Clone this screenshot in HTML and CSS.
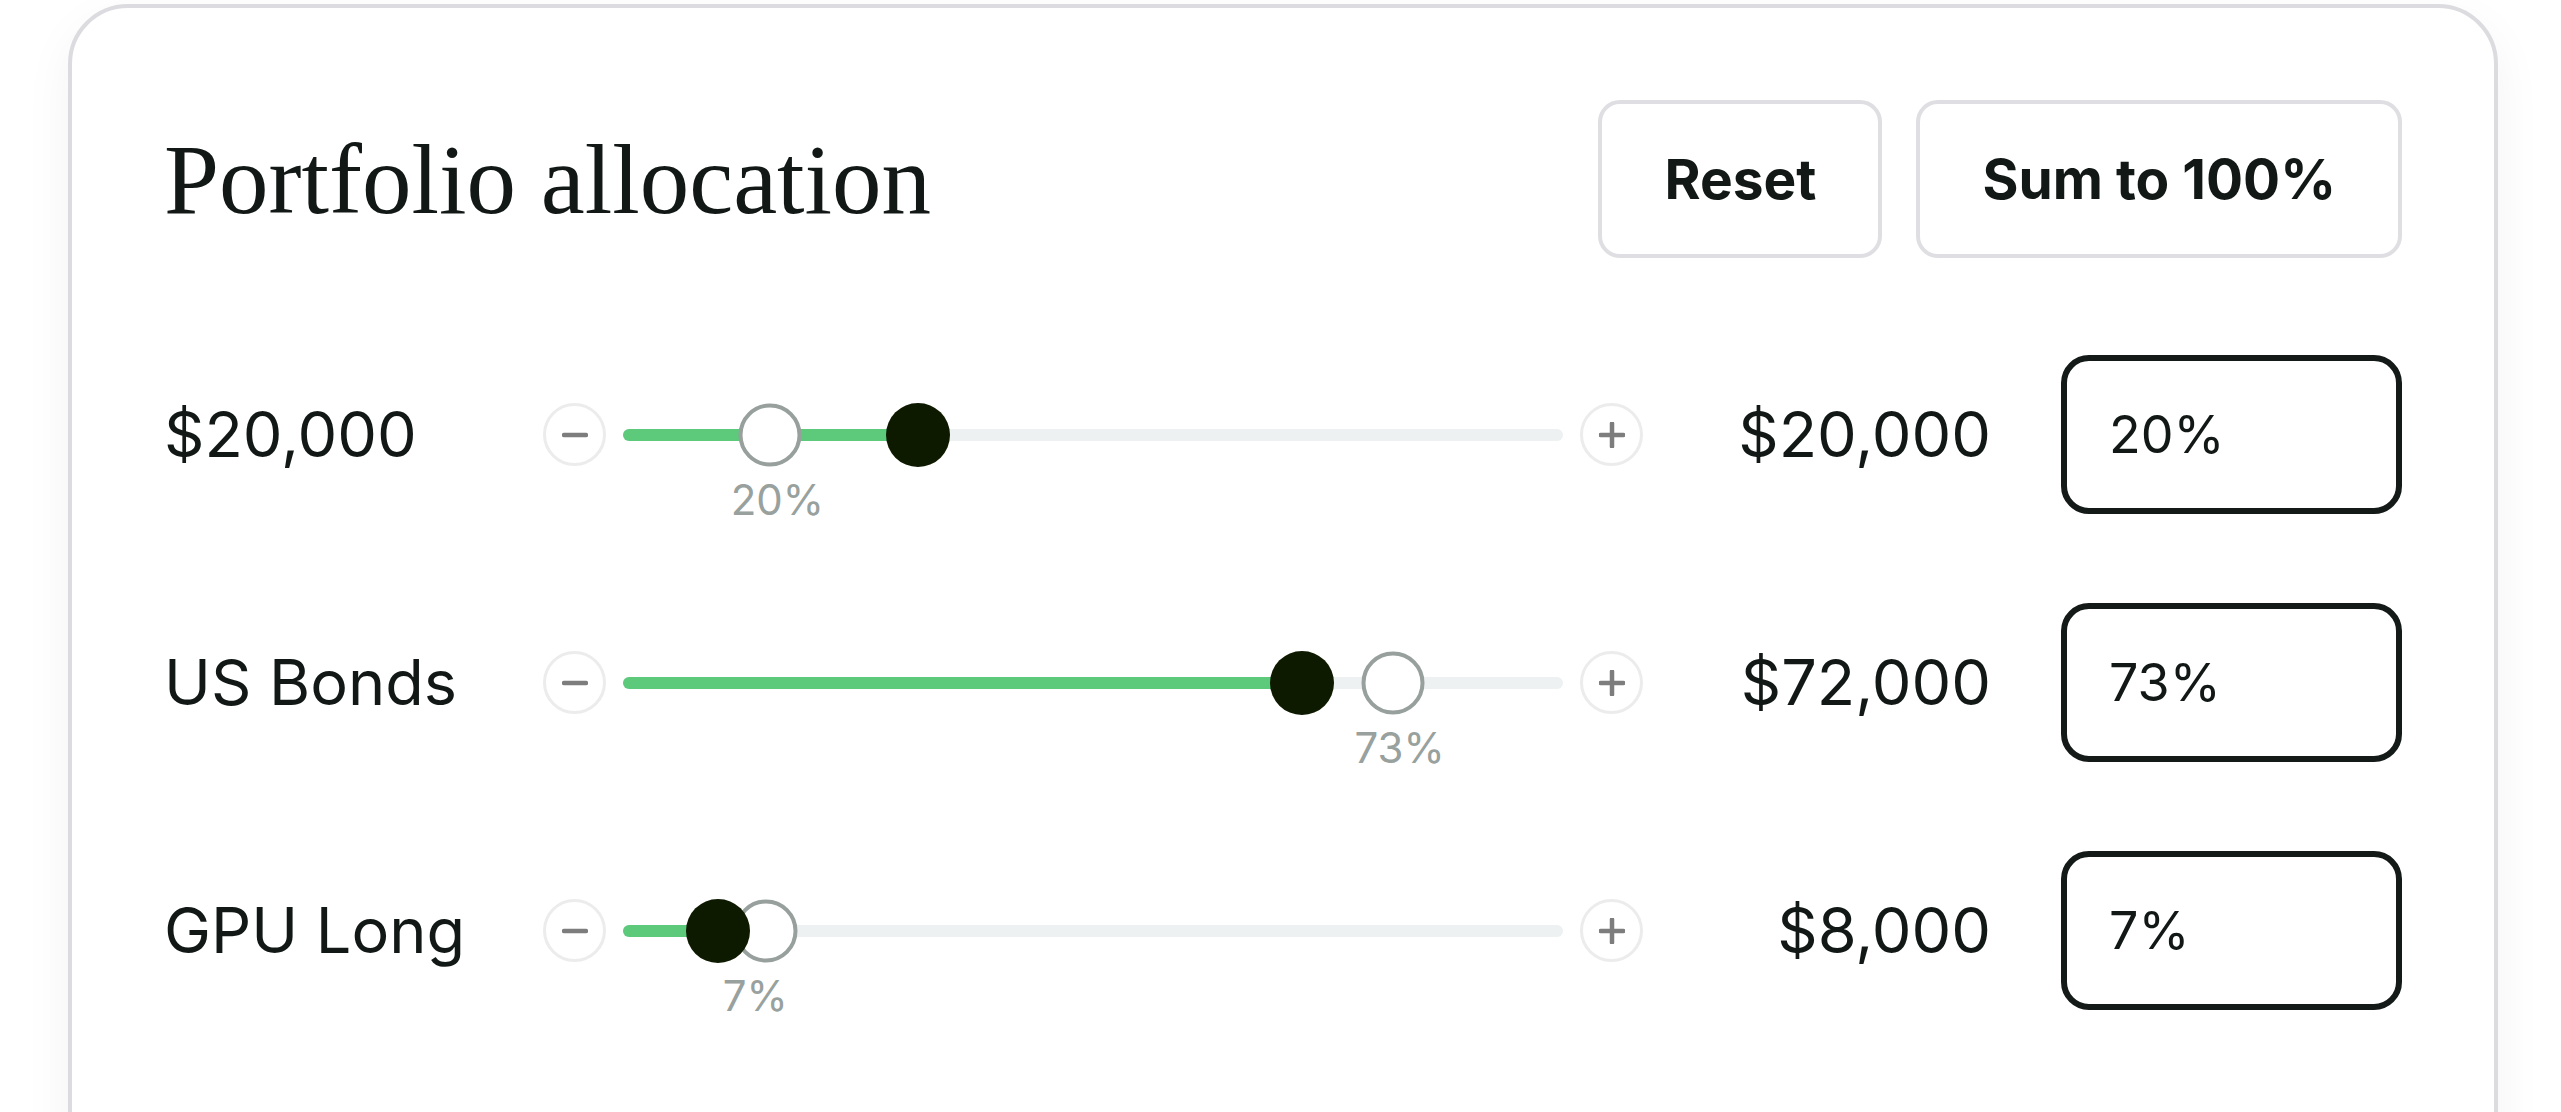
FILE: index.html
```html
<!DOCTYPE html>
<html lang="en">
<head>
<meta charset="utf-8">
<title>Portfolio allocation</title>
<link rel="stylesheet" href="styles.css">
</head>
<body>
<main class="card">
  <header class="card-head">
    <h1 class="title">Portfolio allocation</h1>
    <div class="actions">
      <button class="btn" type="button">Reset</button>
      <button class="btn" type="button">Sum to 100%</button>
    </div>
  </header>

  <section class="rows">
    <div class="row">
      <div class="label">$20,000</div>
      <button class="step" type="button" aria-label="Decrease">
        <svg viewBox="0 0 26 26" width="26" height="26"><path d="M2 13H24" /></svg>
      </button>
      <div class="track">
        <div class="fill" style="width:31.35%"></div>
        <div class="target" style="left:15.62%"></div>
        <div class="thumb" style="left:31.35%"></div>
        <div class="pct" style="left:16.42%">20%</div>
      </div>
      <button class="step" type="button" aria-label="Increase">
        <svg viewBox="0 0 26 26" width="26" height="26"><path d="M1.5 13H24.5M13 1.5V24.5" /></svg>
      </button>
      <div class="amount">$20,000</div>
      <div class="input">20%</div>
    </div>

    <div class="row">
      <div class="label">US Bonds</div>
      <button class="step" type="button" aria-label="Decrease">
        <svg viewBox="0 0 26 26" width="26" height="26"><path d="M2 13H24" /></svg>
      </button>
      <div class="track">
        <div class="fill" style="width:72.26%"></div>
        <div class="thumb" style="left:72.26%"></div>
        <div class="target" style="left:81.93%"></div>
        <div class="pct" style="left:82.62%">73%</div>
      </div>
      <button class="step" type="button" aria-label="Increase">
        <svg viewBox="0 0 26 26" width="26" height="26"><path d="M1.5 13H24.5M13 1.5V24.5" /></svg>
      </button>
      <div class="amount">$72,000</div>
      <div class="input">73%</div>
    </div>

    <div class="row">
      <div class="label">GPU Long</div>
      <button class="step" type="button" aria-label="Decrease">
        <svg viewBox="0 0 26 26" width="26" height="26"><path d="M2 13H24" /></svg>
      </button>
      <div class="track">
        <div class="fill" style="width:10.1%"></div>
        <div class="target" style="left:15.2%"></div>
        <div class="thumb" style="left:10.1%"></div>
        <div class="pct" style="left:14.08%">7%</div>
      </div>
      <button class="step" type="button" aria-label="Increase">
        <svg viewBox="0 0 26 26" width="26" height="26"><path d="M1.5 13H24.5M13 1.5V24.5" /></svg>
      </button>
      <div class="amount">$8,000</div>
      <div class="input">7%</div>
    </div>
  </section>
</main>
</body>
</html>
```

FILE: styles.css
```css
* { box-sizing: border-box; }

html, body {
  margin: 0;
  padding: 0;
  background: #ffffff;
}

body {
  font-family: Inter, "Noto Sans", "Liberation Sans", sans-serif;
  color: #111816;
  padding: 4px 0 0 68px;
}

.card {
  width: 2430px;
  min-height: 1200px;
  border: 4px solid #dcdce0;
  border-radius: 60px;
  padding: 92px;
  background: #ffffff;
  box-shadow: 0 18px 50px rgba(0, 0, 0, 0.05);
}

.card-head {
  display: flex;
  align-items: center;
  justify-content: space-between;
  height: 158px;
}

.title {
  margin: 0;
  font-family: "Liberation Serif", "DejaVu Serif", serif;
  font-weight: 400;
  font-size: 99px;
  line-height: 1;
  color: #111816;
}

.actions {
  display: flex;
  gap: 34px;
}

.btn {
  height: 158px;
  padding: 0 62px;
  border: 4px solid #dfdfe3;
  border-radius: 22px;
  background: #ffffff;
  font-family: Inter, "Liberation Sans", sans-serif;
  font-weight: 700;
  font-size: 55px;
  line-height: 1;
  color: #111816;
}

.rows {
  margin-top: 97px;
  display: flex;
  flex-direction: column;
  gap: 89px;
}

.row {
  display: flex;
  align-items: center;
  height: 159px;
}

.label {
  width: 379px;
  flex: none;
  font-size: 63px;
  line-height: 1;
  white-space: nowrap;
}

.step {
  flex: none;
  width: 63px;
  height: 63px;
  padding: 0;
  border: 3px solid #ececec;
  border-radius: 50%;
  background: #ffffff;
  display: flex;
  align-items: center;
  justify-content: center;
}

.step svg {
  display: block;
  fill: none;
  stroke: #7d7d7d;
  stroke-width: 4.5;
  stroke-linecap: round;
}

.track {
  flex: 1;
  position: relative;
  height: 12px;
  margin: 0 17px;
  border-radius: 6px;
  background: #edf1f1;
}

.fill {
  height: 100%;
  border-radius: 6px;
  background: #5cc97b;
}

.target,
.thumb {
  position: absolute;
  top: 50%;
  border-radius: 50%;
  transform: translate(-50%, -50%);
}

.target {
  width: 63px;
  height: 63px;
  border: 4px solid #97a09c;
  background: #ffffff;
}

.thumb {
  width: 64px;
  height: 64px;
  background: #0e1a00;
}

.pct {
  position: absolute;
  top: 50px;
  transform: translateX(-50%);
  font-size: 42px;
  line-height: 1;
  color: #98a19d;
  white-space: nowrap;
}

.amount {
  width: 348px;
  flex: none;
  text-align: right;
  font-size: 63px;
  line-height: 1;
  white-space: nowrap;
}

.input {
  flex: none;
  margin-left: 70px;
  width: 341px;
  height: 159px;
  border: 6px solid #141a18;
  border-radius: 28px;
  padding-left: 42px;
  display: flex;
  align-items: center;
  font-size: 52px;
  line-height: 1;
}
```
